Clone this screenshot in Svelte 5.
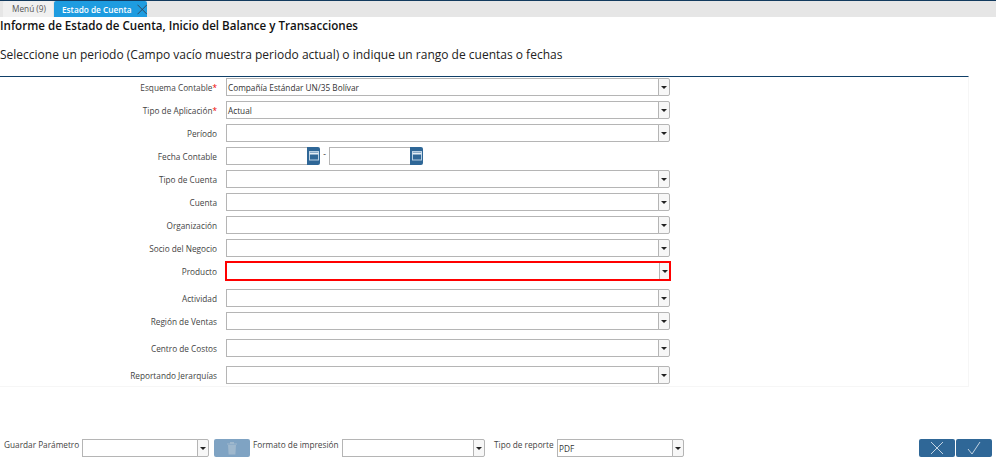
<script>
  const rows = [
    { label: 'Esquema Contable', req: true, value: 'Compañía Estándar UN/35 Bolívar' },
    { label: 'Tipo de Aplicación', req: true, value: 'Actual' },
    { label: 'Período' },
    { label: 'Fecha Contable', dates: true },
    { label: 'Tipo de Cuenta' },
    { label: 'Cuenta' },
    { label: 'Organización' },
    { label: 'Socio del Negocio' },
    { label: 'Producto', error: true, cls: 'after' },
    { label: 'Actividad' },
    { label: 'Región de Ventas', cls: 'after' },
    { label: 'Centro de Costos', cls: 'after' },
    { label: 'Reportando Jerarquías' }
  ];
</script>

{#snippet combo(value, cls)}
  <div class="combo {cls}">
    <div class="field">{value ?? ''}</div>
    <div class="arrow"><span></span></div>
  </div>
{/snippet}

{#snippet dateField()}
  <div class="date">
    <div class="field"></div>
    <div class="cal">
      <svg width="10" height="10" viewBox="0 0 10 10" fill="none" stroke="#b9d0e4" stroke-width="1">
        <rect x="0.5" y="0.5" width="9" height="8.5" />
        <path d="M0.5 2.5H9.5" stroke="#e4eef6" stroke-width="2" />
      </svg>
    </div>
  </div>
{/snippet}

<div class="page">
  <div class="tabs">
    <div class="tab">Menú (9)</div>
    <div class="tab active">
      <span>Estado de Cuenta</span>
      <svg width="11" height="11" viewBox="0 0 11 11" stroke="#33475b" stroke-width="1" fill="none">
        <path d="M0.5 0.5L10.5 10.5M10.5 0.5L0.5 10.5" />
      </svg>
    </div>
  </div>
  <h1>Informe de Estado de Cuenta, Inicio del Balance y Transacciones</h1>
  <p class="help">Seleccione un periodo (Campo vacío muestra periodo actual) o indique un rango de cuentas o fechas</p>

  <div class="form">
    {#each rows as r}
      <div class="row {r.cls ?? ''} {r.error ? 'err' : ''}">
        <div class="label">{r.label}{#if r.req}<i>*</i>{/if}</div>
        {#if r.dates}
          <div class="dates">
            {@render dateField()}
            <span class="dash">-</span>
            {@render dateField()}
          </div>
        {:else}
          {@render combo(r.value, r.error ? 'wide error' : 'wide')}
        {/if}
      </div>
    {/each}
  </div>

  <div class="footer">
    <span class="flabel first">Guardar Parámetro</span>
    {@render combo('', 'f1')}
    <button class="trash" aria-label="Eliminar">
      <svg width="12" height="14" viewBox="0 0 12 14" fill="#9fb8cd">
        <path d="M1 2.5H11V3.5H1ZM4 1H8V2.5H4ZM2 4H10L9.4 13.5H2.6Z" />
      </svg>
    </button>
    <span class="flabel second">Formato de impresión</span>
    {@render combo('', 'f2')}
    <span class="flabel third">Tipo de reporte</span>
    {@render combo('PDF', 'f3')}
    <div class="actions">
      <button class="act" aria-label="Cancelar">
        <svg width="14" height="14" viewBox="0 0 14 14" fill="none" stroke="#c3d4e3" stroke-width="1">
          <path d="M1 1L13 13M13 1L1 13" />
        </svg>
      </button>
      <button class="act" aria-label="Aceptar">
        <svg width="14" height="14" viewBox="0 0 14 14" fill="none" stroke="#c3d4e3" stroke-width="1">
          <path d="M1 8L5 13L13 1" />
        </svg>
      </button>
    </div>
  </div>
</div>

<style>
  :global(body) {
    margin: 0;
    background: #fff;
  }
  .page {
    width: 996px;
    height: 459px;
    overflow: hidden;
    display: flex;
    flex-direction: column;
    font-family: "Open Sans", "Noto Sans", sans-serif;
    color: #333;
    font-size: 8.25px;
  }
  .tabs {
    display: flex;
    align-items: flex-end;
    gap: 1px;
    height: 16px;
    padding-left: 3px;
    background: #e6e6e6;
    border-top: 1px solid #123a5e;
  }
  .tab {
    height: 16px;
    box-sizing: border-box;
    width: 50px;
    padding-top: 2px;
    padding-left: 2px;
    text-align: center;
    background: #f0f0f0;
    color: #555;
    white-space: nowrap;
    border-radius: 2px 2px 0 0;
  }
  .tab.active {
    width: 93px;
    display: flex;
    align-items: center;
    gap: 5px;
    padding: 0 0 0 8px;
    background: #1e9ce0;
    color: #fff;
    font-weight: 600;
  }
  .tab.active span {
    width: 70px;
  }
  h1 {
    margin: 0;
    height: 18px;
    line-height: 18px;
    font-size: 11.6px;
    font-weight: 600;
    color: #111;
    white-space: nowrap;
  }
  .help {
    margin: 11px 0 0;
    height: 18px;
    line-height: 18px;
    font-size: 12px;
    color: #222;
    white-space: nowrap;
  }
  .form {
    margin-top: 12px;
    width: 969px;
    height: 311px;
    box-sizing: border-box;
    border-top: 1px solid #0f3f68;
    border-right: 1px solid #f6f6f6;
    border-bottom: 1px solid #f6f6f6;
  }
  .row {
    display: flex;
    align-items: flex-start;
    box-sizing: border-box;
    padding-top: 1px;
    height: 23px;
  }
  .row.err {
    padding-top: 0;
  }
  .row.after {
    margin-bottom: 4px;
  }
  .label {
    width: 217px;
    margin-right: 9px;
    text-align: right;
    white-space: nowrap;
    color: #444;
    line-height: 20px;
  }
  .row.err .label {
    line-height: 22px;
  }
  .label i {
    color: #e00;
    font-style: normal;
  }
  .combo {
    display: flex;
    height: 18px;
    box-sizing: border-box;
  }
  .combo.wide {
    width: 444px;
  }
  .field {
    flex: 1;
    min-width: 0;
    box-sizing: border-box;
    height: 18px;
    line-height: 17px;
    padding-left: 1px;
    background: #fff;
    border: 1px solid #b5b5b5;
    color: #333;
    white-space: nowrap;
  }
  .arrow {
    width: 12px;
    height: 18px;
    box-sizing: border-box;
    display: flex;
    align-items: center;
    justify-content: center;
    background: #f7f7f7;
    border: 1px solid #b5b5b5;
    border-radius: 0 2px 2px 0;
    margin-left: -1px;
  }
  .arrow span {
    width: 0;
    height: 0;
    border-left: 3px solid transparent;
    border-right: 3px solid transparent;
    border-top: 3px solid #222;
  }
  .combo.error {
    width: 446px;
    height: 20px;
    margin-left: -1px;
    position: relative;
  }
  .combo.error::after {
    content: "";
    position: absolute;
    inset: 0;
    border: 2px solid #f00;
  }
  .combo.error .field,
  .combo.error .arrow {
    height: 20px;
  }
  .dates {
    display: flex;
    align-items: center;
  }
  .date {
    display: flex;
    width: 94px;
  }
  .date .field {
    border-right: 0;
  }
  .cal {
    width: 13px;
    height: 18px;
    display: flex;
    align-items: center;
    justify-content: center;
    background: #2f6797;
    border-radius: 0 2px 2px 0;
  }
  .dash {
    width: 9px;
    margin-bottom: 6px;
    text-align: center;
  }
  .footer {
    display: flex;
    align-items: flex-start;
    margin-top: 52px;
    height: 18px;
  }
  .flabel {
    white-space: nowrap;
    color: #444;
    line-height: 12px;
  }
  .flabel.first {
    margin-left: 4px;
    width: 78px;
  }
  .flabel.second {
    width: 89px;
  }
  .flabel.third {
    width: 63px;
  }
  .combo.f1 {
    width: 127px;
  }
  .combo.f2 {
    width: 143px;
    margin-right: 9px;
  }
  .combo.f3 {
    width: 127px;
  }
  .trash {
    width: 36px;
    height: 18px;
    margin: 0 3px 0 5px;
    padding: 0;
    border: 0;
    border-radius: 2px;
    background: #7fa3c3;
    display: flex;
    align-items: center;
    justify-content: center;
  }
  .actions {
    display: flex;
    gap: 1px;
    margin-left: auto;
    margin-right: 4px;
  }
  .act {
    width: 36px;
    height: 18px;
    padding: 0;
    border: 0;
    border-radius: 2px;
    background: #2f6797;
    display: flex;
    align-items: center;
    justify-content: center;
  }
</style>
